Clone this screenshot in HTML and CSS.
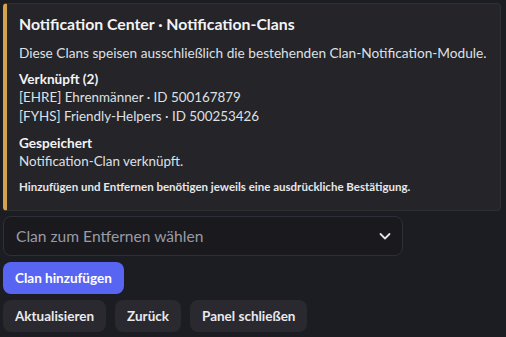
FILE: index.html
```html
<!DOCTYPE html>
<html lang="de">
<head>
  <meta charset="UTF-8">
  <title>Notification-Clans</title>
  <link rel="stylesheet" href="styles.css">
</head>
<body>
  <div class="message">

    <div class="embed">
      <div class="embed-title">Notification Center · Notification-Clans</div>
      <div class="embed-desc">Diese Clans speisen ausschließlich die bestehenden Clan-Notification-Module.</div>

      <div class="embed-field">
        <div class="field-name">Verknüpft (2)</div>
        <div class="field-value">[EHRE] Ehrenmänner · ID 500167879</div>
        <div class="field-value">[FYHS] Friendly-Helpers · ID 500253426</div>
      </div>

      <div class="embed-field">
        <div class="field-name">Gespeichert</div>
        <div class="field-value">Notification-Clan verknüpft.</div>
      </div>

      <div class="embed-footer">Hinzufügen und Entfernen benötigen jeweils eine ausdrückliche Bestätigung.</div>
    </div>

    <div class="select">
      <span class="select-placeholder">Clan zum Entfernen wählen</span>
      <svg class="chevron" width="14" height="14" viewBox="0 0 14 14">
        <path d="M2.5 5 L7 9.5 L11.5 5" fill="none" stroke="#e3e4e8" stroke-width="1.8" stroke-linecap="round" stroke-linejoin="round"/>
      </svg>
    </div>

    <div class="button-row">
      <button class="btn btn-primary">Clan hinzufügen</button>
    </div>

    <div class="button-row">
      <button class="btn">Aktualisieren</button>
      <button class="btn">Zurück</button>
      <button class="btn">Panel schließen</button>
    </div>

  </div>
</body>
</html>
```

FILE: styles.css
```css
body {
  margin: 0;
  background: #1c1d22;
  font-family: Lato, "Noto Sans", sans-serif;
  color: #dfe0e4;
}

.message {
  padding: 3px;
  display: flex;
  flex-direction: column;
  gap: 6px;
}

.embed {
  width: 498px;
  box-sizing: border-box;
  background: #242429;
  border: 1px solid #2e2f35;
  border-left: 4px solid #d2a24e;
  border-radius: 4px;
  padding: 10px 12px 15px 12px;
  margin-bottom: -1px;
}

.embed-title {
  font-size: 15.8px;
  font-weight: 700;
  line-height: 20px;
  color: #f2f3f5;
}

.embed-desc {
  font-size: 13.65px;
  line-height: 18px;
  margin-top: 10px;
  white-space: nowrap;
}

.embed-field {
  margin-top: 8px;
}

.embed-field + .embed-field {
  margin-top: 9px;
}

.field-name {
  font-size: 13.6px;
  font-weight: 700;
  line-height: 18px;
  color: #f2f3f5;
}

.field-value {
  font-size: 13.4px;
  line-height: 18.5px;
}

.embed-footer {
  margin-top: 8px;
  font-size: 11.5px;
  font-weight: 700;
  line-height: 16px;
  color: #e6e7ea;
  white-space: nowrap;
}

.select {
  width: 400px;
  height: 40px;
  box-sizing: border-box;
  background: #19191e;
  border: 1px solid #2f3037;
  border-radius: 8px;
  padding: 0 10px 0 12px;
  display: flex;
  align-items: center;
  justify-content: space-between;
}

.select-placeholder {
  font-size: 15.6px;
  color: #9a9ba3;
}

.button-row {
  display: flex;
  gap: 9px;
}

.btn {
  font-family: inherit;
  font-size: 13.5px;
  font-weight: 700;
  color: #e9eaee;
  background: #29292f;
  border: none;
  border-radius: 8px;
  height: 32px;
  padding: 0 12px;
}

.btn-primary {
  background: #5865f2;
  color: #fff;
}
```
